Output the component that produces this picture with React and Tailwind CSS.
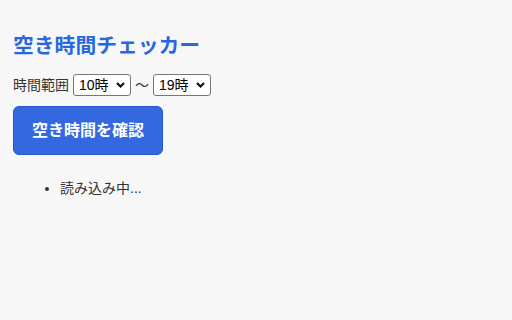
import React from "react";

const font = { fontFamily: '"Liberation Sans", "Noto Sans CJK JP", sans-serif' };

function TimeSelect({ value }) {
  const hours = [];
  for (let h = 0; h < 24; h++) hours.push(h);
  return (
    <div className="relative h-[22px] w-[58px]">
      <select
        defaultValue={value}
        className="h-full w-full appearance-none rounded-[3px] border border-[#767676] bg-white pl-[5px] text-[14px] leading-[20px] text-black"
      >
        {hours.map((h) => (
          <option key={h} value={h}>
            {h}時
          </option>
        ))}
      </select>
      <svg
        className="pointer-events-none absolute right-[6px] top-[8px]"
        width="9"
        height="6"
        viewBox="0 0 9 6"
        fill="none"
      >
        <path d="M1 1l3.5 3.5L8 1" stroke="#111" strokeWidth="2.2" />
      </svg>
    </div>
  );
}

export default function App() {
  return (
    <div className="min-h-[320px] bg-[#f7f7f7] px-[13px] pt-[32px] text-[#333]" style={font}>
      <h1 className="text-[20.8px] font-bold leading-[28px] text-[#2868df]">空き時間チェッカー</h1>

      <div className="mt-[14px] flex items-center gap-[4px] text-[14px] leading-[22px]">
        <span>時間範囲</span>
        <TimeSelect value={10} />
        <span>〜</span>
        <TimeSelect value={19} />
      </div>

      <button className="mt-[10px] rounded-[6px] border border-[#2356cf] bg-[#3468e0] px-[18px] py-[11px] text-[16px] font-bold leading-[25px] text-white">
        空き時間を確認
      </button>

      <ul className="mt-[23px] list-disc pl-[47px] text-[14px] leading-[20px]">
        <li>読み込み中...</li>
      </ul>
    </div>
  );
}
